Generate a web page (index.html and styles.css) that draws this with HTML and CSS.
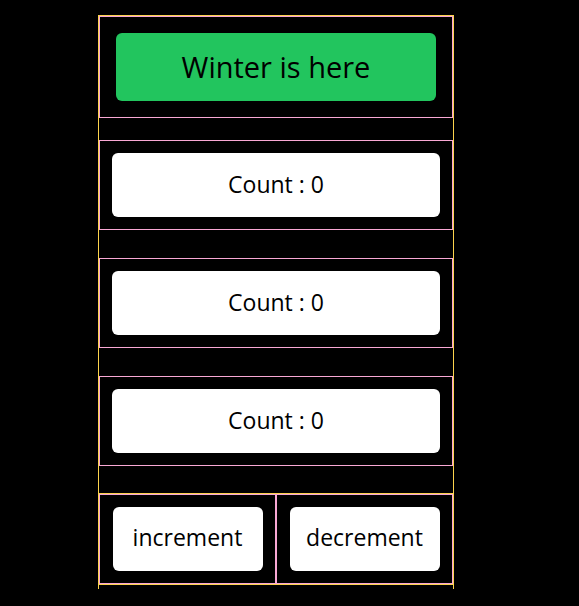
FILE: index.html
```html
<!DOCTYPE html>
<html lang="en">
<head>
<meta charset="utf-8">
<title>Winter is here</title>
<link rel="stylesheet" href="styles.css">
</head>
<body>
<div class="app">
  <div class="hero">
    <button class="hero-btn">Winter is here</button>
  </div>
  <div class="counter">
    <div class="count-box">Count : 0</div>
  </div>
  <div class="counter">
    <div class="count-box">Count : 0</div>
  </div>
  <div class="counter">
    <div class="count-box">Count : 0</div>
  </div>
  <div class="controls">
    <div class="cell"><button class="ctrl-btn">increment</button></div>
    <div class="cell"><button class="ctrl-btn">decrement</button></div>
  </div>
</div>
</body>
</html>
```

FILE: styles.css
```css
html, body {
  margin: 0;
  padding: 0;
  background: #000;
}
body {
  font-family: "Open Sans", "DejaVu Sans", sans-serif;
  color: #000;
}
.app {
  width: 354px;
  margin: 16px 0 0 99px;
  outline: 1px solid #fcd34d;
  display: flex;
  flex-direction: column;
}
.hero {
  box-sizing: border-box;
  height: 102px;
  border: 1px solid #f9a8d4;
  padding: 15px;
  margin-bottom: 22px;
  display: flex;
  align-items: center;
  justify-content: center;
}
.hero-btn {
  width: 320px;
  height: 68px;
  border: none;
  border-radius: 6px;
  background: #22c55e;
  color: #000;
  font-family: inherit;
  font-size: 29px;
  padding: 0 0 2px;
}
.counter {
  box-sizing: border-box;
  height: 90px;
  border: 1px solid #f9a8d4;
  margin-bottom: 28px;
  display: flex;
  align-items: center;
  justify-content: center;
}
.count-box {
  box-sizing: border-box;
  width: 328px;
  height: 64px;
  padding-bottom: 3px;
  background: #fff;
  border-radius: 6px;
  display: flex;
  align-items: center;
  justify-content: center;
  font-size: 23px;
}
.controls {
  display: flex;
  outline: 1px solid #fcd34d;
  margin-bottom: 5px;
}
.cell {
  box-sizing: border-box;
  flex: 1;
  height: 90px;
  border: 1px solid #f9a8d4;
  display: flex;
  align-items: center;
  justify-content: center;
}
.ctrl-btn {
  width: 150px;
  height: 64px;
  border: none;
  border-radius: 6px;
  background: #fff;
  color: #000;
  font-family: inherit;
  font-size: 23px;
  padding: 0 0 4px;
}
```
